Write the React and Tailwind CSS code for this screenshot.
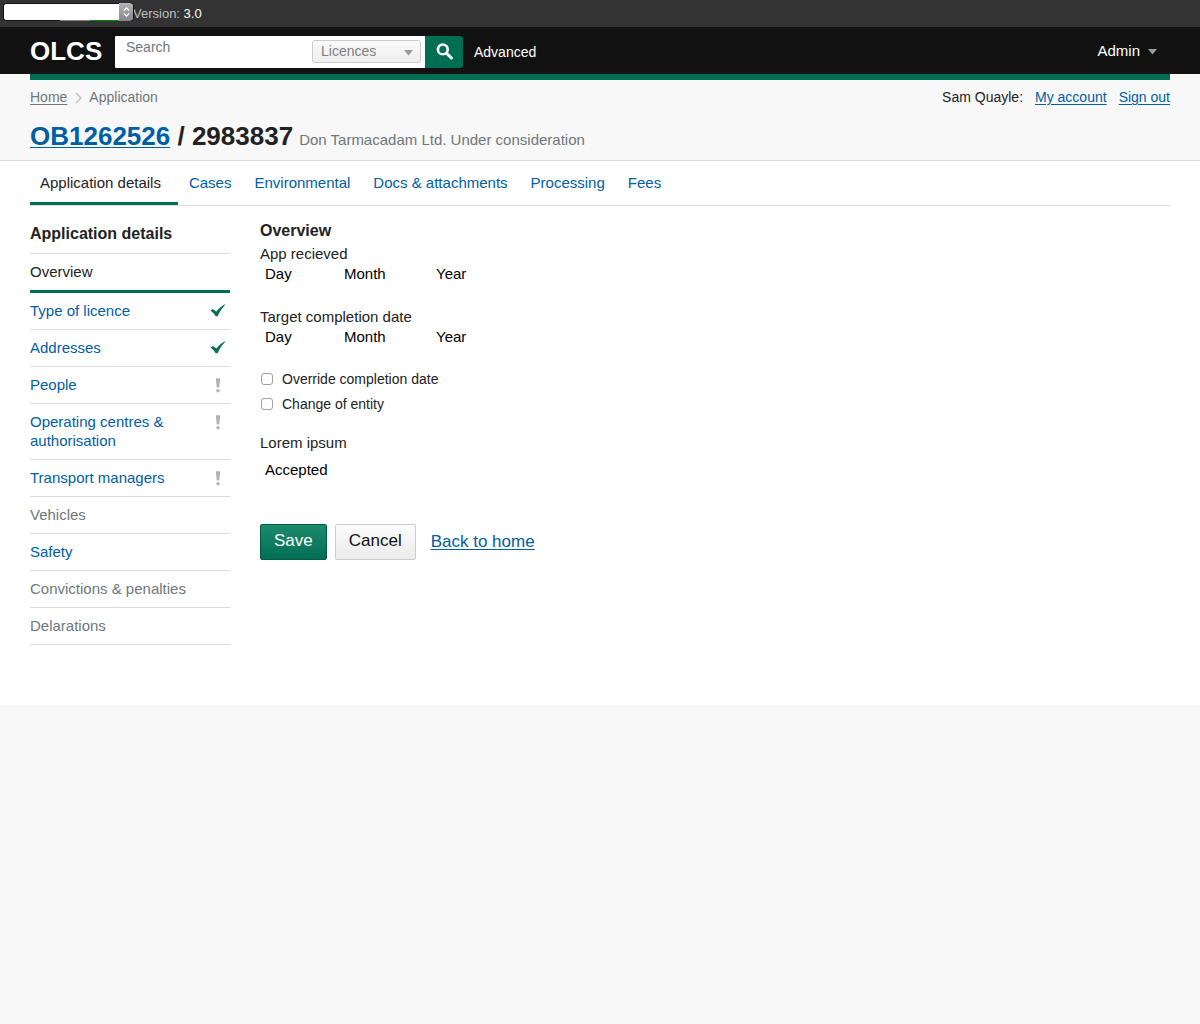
import React from "react";

const TABS = ["Application details", "Cases", "Environmental", "Docs & attachments", "Processing", "Fees"];

const SECTIONS = [
  { label: "Overview", state: "active" },
  { label: "Type of licence", state: "link", mark: "done" },
  { label: "Addresses", state: "link", mark: "done" },
  { label: "People", state: "link", mark: "todo" },
  { label: "Operating centres & authorisation", state: "link", mark: "todo" },
  { label: "Transport managers", state: "link", mark: "todo" },
  { label: "Vehicles", state: "disabled" },
  { label: "Safety", state: "link" },
  { label: "Convictions & penalties", state: "disabled" },
  { label: "Delarations", state: "disabled" },
];

function Tick() {
  return (
    <svg className="mt-[3px] mr-1 shrink-0" width="16" height="13" viewBox="0 0 16 13" role="img" aria-label="Complete">
      <path d="M.6 6.400 2.800 4.900 6.300 7.600C8.500 4.800 11.500 2 14.800.2L15.100.8C12.300 3.800 9.800 7.500 7.600 12.300H5.800C4.600 10.200 2.800 8.200 .6 6.400Z" fill="#0b6e50" />
    </svg>
  );
}

function Exclaim() {
  return (
    <svg className="mt-[3px] mr-[9px] shrink-0" width="6" height="15" viewBox="0 0 6 15" role="img" aria-label="Incomplete">
      <path d="M.8.300H5.200L4.200 9.600H1.800Z" fill="#b1b1b1" />
      <rect x="1.400" y="11.200" width="3.200" height="3" rx="1" fill="#b1b1b1" />
    </svg>
  );
}

function Caret({ className }) {
  return (
    <svg className={className} width="9" height="6" viewBox="0 0 9 6" aria-hidden="true">
      <path d="M0 0H9L4.500 5.500Z" fill="#999" />
    </svg>
  );
}

function DateFields({ legend }) {
  return (
    <fieldset className="mb-[23px]">
      <legend className="block leading-5">{legend}</legend>
      <div className="flex text-black">
        <select aria-label={`${legend}, day`} className="h-5 w-[79px] appearance-none bg-transparent px-[5px] leading-5">
          <option>Day</option>
        </select>
        <select aria-label={`${legend}, month`} className="h-5 w-[92px] appearance-none bg-transparent px-[5px] leading-5">
          <option>Month</option>
        </select>
        <select aria-label={`${legend}, year`} className="h-5 w-20 appearance-none bg-transparent px-[5px] leading-5">
          <option>Year</option>
        </select>
      </div>
    </fieldset>
  );
}

function Check({ children }) {
  return (
    <label className="flex items-center text-[14px] leading-5">
      <input type="checkbox" className="ml-px mr-[9px] h-3 w-3 appearance-none rounded-[3px] border border-[#a0a0a0] bg-white checked:bg-[#006e53]" />
      {children}
    </label>
  );
}

export default function App() {
  return (
    <div className="min-h-screen bg-[#f8f8f8] font-['Liberation_Sans',Arial,sans-serif] text-[15px] text-[#222]">
      <div className="flex h-[27px] items-center bg-[#333] pl-1 text-[13px] text-[#bfbfbf]">
        <div className="relative mb-[3px] h-4 w-[129px] rounded-[3px] bg-white shadow-[0_0_0_1px_#111]">
          <select aria-label="Prototype version" className="block h-4 w-full appearance-none rounded-[3px] bg-white text-transparent">
            <option></option>
          </select>
          <span className="pointer-events-none absolute top-4 left-14 h-px w-[30px] bg-[#808080]" />
          <span className="pointer-events-none absolute top-4 left-[86px] h-px w-[32px] bg-[#008a00]" />
          <span className="pointer-events-none absolute top-[-1px] right-0 flex h-[18px] w-[14px] items-center justify-center rounded-r-[4px] bg-gradient-to-b from-[#b5b5b8] to-[#85858a]">
            <svg width="7" height="10" viewBox="0 0 7 10" fill="none" stroke="#fff" strokeWidth="1.300" aria-hidden="true">
              <path d="M.8 3.600 3.500.9 6.200 3.600M.8 6.400 3.500 9.100 6.200 6.400" />
            </svg>
          </span>
        </div>
        <p className="leading-5">Version: <span className="text-white">3.0</span></p>
      </div>

      <header className="flex h-[47px] items-center bg-[#111] px-[30px] text-white">
        <a href="#home" className="w-[85px] text-[26px] leading-8 font-bold">OLCS</a>
        <form className="mt-[2px] flex h-8" onSubmit={(e) => e.preventDefault()}>
          <div className="flex w-[310px] rounded-l-[1px] bg-white">
            <input type="text" aria-label="Search" placeholder="Search" className="h-[22px] min-w-0 flex-1 bg-transparent pl-[11px] text-[14px] text-[#222] placeholder:text-[#6f777b]" />
            <div className="relative mt-1 mr-1 h-[23px] w-[109px]">
              <select aria-label="Search type" className="h-full w-full appearance-none rounded-[3px] border border-[#ccc] bg-gradient-to-b from-[#fafafa] to-[#eee] px-2 text-[14px] text-[#808080]">
                <option>Licences</option>
              </select>
              <Caret className="pointer-events-none absolute top-[10px] right-2" />
            </div>
          </div>
          <button type="submit" aria-label="Submit search" className="flex w-[38px] items-center justify-center rounded-r-[3px] bg-[#006e53]">
            <svg width="17" height="17" viewBox="0 0 17 17" fill="none" stroke="#fff" aria-hidden="true">
              <circle cx="6.800" cy="6.400" r="4.900" strokeWidth="2.600" />
              <path d="M10.400 10.200 15.400 15" strokeWidth="3" strokeLinecap="round" />
            </svg>
          </button>
        </form>
        <a href="#advanced" className="mt-[3px] ml-[11px] text-[14px] leading-5">Advanced</a>
        <button type="button" className="mt-px mr-[13px] ml-auto flex items-center gap-2 leading-5">
          Admin
          <Caret className="mt-[2px]" />
        </button>
      </header>

      <section className="border-b border-[#dcdcdc] px-[30px]">
        <div className="h-[6px] bg-[#006e53]" />
        <div className="flex justify-between pt-[7px] text-[14px] leading-5">
          <nav aria-label="Breadcrumb" className="flex items-center text-[#6f777b]">
            <a href="#home" className="underline underline-offset-2">Home</a>
            <svg className="mr-[7px] ml-2 mt-[2px]" width="7" height="12" viewBox="0 0 7 12" fill="none" stroke="#bfc1c3" strokeWidth="1.500" aria-hidden="true">
              <path d="M1 1 6 6 1 11" />
            </svg>
            <span>Application</span>
          </nav>
          <div className="flex gap-3">
            <span>Sam Quayle:</span>
            <a href="#account" className="text-[#005ea5] underline underline-offset-2">My account</a>
            <a href="#signout" className="text-[#005ea5] underline underline-offset-2">Sign out</a>
          </div>
        </div>
        <div className="flex items-baseline pt-[13px] pb-2">
          <h1 className="text-[26px] leading-8 font-bold">
            <a href="#licence" className="text-[#005ea5] underline decoration-1 underline-offset-2">OB1262526</a> / 2983837
          </h1>
          <p className="ml-[6px] text-[#6f777b]">Don Tarmacadam Ltd. Under consideration</p>
        </div>
      </section>

      <div className="bg-white px-[30px] pb-[60px]">
        <nav aria-label="Application" className="flex h-[45px] border-b border-[#dcdcdc]">
          {TABS.map((tab, i) => (
            <a
              key={tab}
              href="#tab"
              className={
                i === 0
                  ? "mr-[11px] h-[44px] border-b-[3px] border-[#006e53] pt-3 pr-[17px] pl-[10px] leading-5"
                  : "mr-[23px] pt-3 leading-5 text-[#005ea5]"
              }
            >
              {tab}
            </a>
          ))}
        </nav>

        <div className="flex gap-[30px]">
          <aside className="w-[200px] shrink-0">
            <h2 className="border-b border-[#dcdcdc] pt-[18px] pb-[9px] text-[16px] leading-5 font-bold">Application details</h2>
            <ul>
              {SECTIONS.map(({ label, state, mark }) => (
                <li
                  key={label}
                  className={
                    state === "active"
                      ? "border-b-[3px] border-[#006e53] pt-2 pb-[9px] leading-[19px]"
                      : "flex items-start justify-between border-b border-[#dcdcdc] pt-2 pb-[9px] leading-[19px]"
                  }
                >
                  {state === "disabled" ? (
                    <span className="text-[#6f777b]">{label}</span>
                  ) : (
                    <a href="#section" className={state === "link" ? "max-w-[160px] text-[#005ea5]" : ""}>{label}</a>
                  )}
                  {mark === "done" && <Tick />}
                  {mark === "todo" && <Exclaim />}
                </li>
              ))}
            </ul>
          </aside>

          <main className="flex-1 pt-[15px]">
            <h2 className="mb-[3px] text-[16px] leading-5 font-bold">Overview</h2>
            <form onSubmit={(e) => e.preventDefault()}>
              <DateFields legend="App recieved" />
              <DateFields legend="Target completion date" />
              <div className="-mt-px flex flex-col items-start gap-[5px]">
                <Check>Override completion date</Check>
                <Check>Change of entity</Check>
              </div>
              <label htmlFor="status" className="mt-[19px] mb-[7px] block leading-5">Lorem ipsum</label>
              <select id="status" className="block h-5 w-40 appearance-none bg-transparent px-[5px] leading-5 text-black">
                <option>Accepted</option>
              </select>
              <div className="mt-[44px] flex h-9 text-[17px]">
                <button type="submit" className="rounded-[2px] border border-[#005a44] bg-gradient-to-b from-[#1d8a6c] to-[#006e53] px-[13px] pb-[3px] text-white">Save</button>
                <button type="button" className="ml-2 rounded-[2px] border border-[#ccc] bg-gradient-to-b from-[#fcfcfc] to-[#ebebeb] px-[13px] pb-[3px] text-[#111]">Cancel</button>
                <a href="#home" className="ml-[15px] self-center text-[#005ea5] underline underline-offset-2">Back to home</a>
              </div>
            </form>
          </main>
        </div>
      </div>
    </div>
  );
}
